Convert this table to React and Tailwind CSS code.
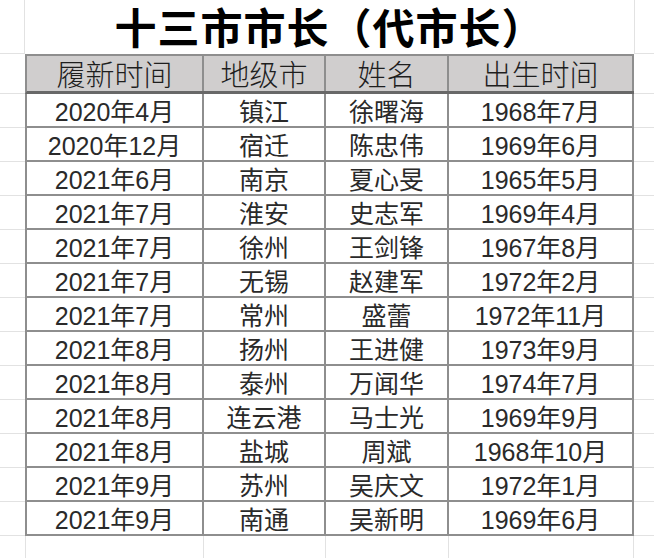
const rows = [
  ["2020年4月", "镇江", "徐曙海", "1968年7月"],
  ["2020年12月", "宿迁", "陈忠伟", "1969年6月"],
  ["2021年6月", "南京", "夏心旻", "1965年5月"],
  ["2021年7月", "淮安", "史志军", "1969年4月"],
  ["2021年7月", "徐州", "王剑锋", "1967年8月"],
  ["2021年7月", "无锡", "赵建军", "1972年2月"],
  ["2021年7月", "常州", "盛蕾", "1972年11月"],
  ["2021年8月", "扬州", "王进健", "1973年9月"],
  ["2021年8月", "泰州", "万闻华", "1974年7月"],
  ["2021年8月", "连云港", "马士光", "1969年9月"],
  ["2021年8月", "盐城", "周斌", "1968年10月"],
  ["2021年9月", "苏州", "吴庆文", "1972年1月"],
  ["2021年9月", "南通", "吴新明", "1969年6月"],
];

const headers = ["履新时间", "地级市", "姓名", "出生时间"];
const widths = ["w-[177px]", "w-[122px]", "w-[123px]", "w-[185px]"];

const font = { fontFamily: '"Liberation Sans", "Noto Sans CJK SC", sans-serif' };

export default function App() {
  return (
    <div className="w-[654px] h-[558px] bg-white overflow-hidden text-[#2a2a2a]" style={font}>
      {/* title row */}
      <div className="flex h-[54px]">
        <div className="w-[25px] border-r border-b border-[#e2e2e2]" />
        <div className="w-[609px] flex items-center justify-center pt-[6px] text-[42px] font-bold text-black leading-none tracking-[1px]">
          十三市市长（代市长）
        </div>
        <div className="flex-1 border-l border-b border-[#e2e2e2]" />
      </div>

      {/* header */}
      <div className="flex h-[40px]">
        <div className="w-[25px] border-b border-[#e2e2e2]" />
        <div className="flex bg-[#d0cece] border-t-2 border-l-2 border-b-[3px] border-t-[#8e8e8e] border-l-[#8e8e8e] border-b-[#686868]">
          {headers.map((h, i) => (
            <div
              key={h}
              className={`${widths[i]} flex items-center justify-center pt-[5px] text-[29px] font-light leading-none text-[#1e1e1e] border-r-2 border-[#8e8e8e]`}
            >
              {h}
            </div>
          ))}
        </div>
        <div className="flex-1 border-b border-[#e2e2e2]" />
      </div>

      {/* data rows */}
      {rows.map((r, ri) => (
        <div key={ri} className="flex h-[34px]">
          <div className="w-[25px] border-b border-[#e2e2e2]" />
          <div className="flex border-l-2 border-b-2 border-[#8e8e8e]">
            {r.map((c, i) => (
              <div
                key={i}
                className={`${widths[i]} flex items-center justify-center pt-[5px] text-[25px] leading-none border-r-2 border-[#8e8e8e]`}
              >
                {c}
              </div>
            ))}
          </div>
          <div className="flex-1 border-b border-[#e2e2e2]" />
        </div>
      ))}

      {/* below table */}
      <div className="flex h-[22px]">
        <div className="w-[26px] border-r border-[#e2e2e2]" />
        <div className="w-[178px] border-r border-[#e2e2e2]" />
        <div className="w-[122px] border-r border-[#e2e2e2]" />
        <div className="w-[123px] border-r border-[#e2e2e2]" />
        <div className="w-[185px] border-r border-[#e2e2e2]" />
      </div>
    </div>
  );
}
